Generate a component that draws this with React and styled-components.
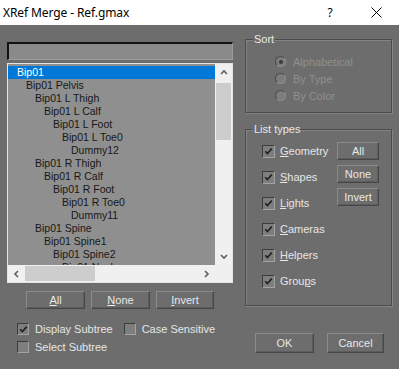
import React from 'react';
import styled, { createGlobalStyle } from 'styled-components';

const BG = '#6d6d6d';

const Global = createGlobalStyle`
  html, body { margin: 0; padding: 0; }
  body {
    width: 399px; height: 369px; overflow: hidden; background: ${BG};
    font-family: "Liberation Sans", Arial, sans-serif;
  }
  * { box-sizing: border-box; }
`;

const Window = styled.div`
  width: 399px; height: 369px; display: flex; flex-direction: column; background: ${BG};
`;

const TitleBar = styled.div`
  height: 25px; flex-shrink: 0; background: #fff; display: flex; align-items: center; padding-left: 3px;
`;
const Title = styled.div`
  flex: 1; font-family: "Noto Sans", "Open Sans", sans-serif; font-size: 12px; color: #000; letter-spacing: -0.1px;
`;
const TitleButton = styled.div`
  width: 46px; height: 25px; display: flex; align-items: center; justify-content: center;
  font-family: "Noto Sans", sans-serif; font-size: 12px; color: #000;
`;

const Body = styled.div`
  flex: 1; display: flex; padding-left: 7px; gap: 12px;
`;

const LeftCol = styled.div`
  width: 226px; display: flex; flex-direction: column; padding-top: 17px;
`;

const SearchBox = styled.div`
  height: 18px; background: #8a8a8a;
  border-top: 2px solid #121212; border-left: 2px solid #121212;
  border-right: 1px solid #9c9c9c; border-bottom: 1px solid #9c9c9c;
`;

const ListBox = styled.div`
  margin-top: 3px; height: 220px; border: 1px solid #e4e4e4;
  display: grid; grid-template-columns: 1fr 17px; grid-template-rows: 1fr 17px;
  background: #8f8f8f;
`;

const ListContent = styled.div`
  overflow: hidden; padding-top: 2px;
`;

const Row = styled.div`
  height: 13px; line-height: 13px; font-size: 10.5px; white-space: nowrap;
  padding-left: ${p => 9 + p.$level * 9}px;
  color: ${p => (p.$selected ? '#ffffff' : '#181818')};
  background: ${p => (p.$selected ? '#0078d7' : 'transparent')};
`;

const VScroll = styled.div`
  background: #f0f0f0; display: flex; flex-direction: column;
`;
const HScroll = styled.div`
  background: #f0f0f0; display: flex; align-items: stretch;
`;
const Corner = styled.div`
  background: #f0f0f0;
`;
const ArrowBtn = styled.div`
  width: 17px; height: 17px; flex-shrink: 0; display: flex; align-items: center; justify-content: center;
`;
const VTrack = styled.div`
  flex: 1; padding: 2px 1px 0 1px;
`;
const VThumb = styled.div`
  height: 57px; background: #cdcdcd;
`;
const HTrack = styled.div`
  flex: 1; padding: 1px 0;
`;
const HThumb = styled.div`
  width: 70px; height: 100%; background: #cdcdcd;
`;

const ButtonRow = styled.div`
  display: flex; gap: 6px; padding-left: 19px; margin-top: 8px;
`;

const Btn = styled.div`
  width: ${p => p.$w}px; height: ${p => p.$h || 18}px;
  display: flex; align-items: center; justify-content: center;
  font-size: 11px; color: #e8e8e8; background: ${BG};
  border: 1px solid; border-color: #8b8b8b #474747 #474747 #8b8b8b;
  box-shadow: inset -1px -1px 0 #5c5c5c;
  & u { text-decoration: underline; text-underline-offset: 1px; }
`;

const OptionRow = styled.div`
  display: flex; align-items: center; padding-left: 10px; gap: 11px;
  margin-top: ${p => p.$mt}px; height: 12px;
`;

const CheckLabel = styled.div`
  display: flex; align-items: center; gap: ${p => p.$gap || 6}px;
  font-size: 11px; color: #e6e6e6; height: ${p => p.$h || 12}px; white-space: nowrap;
  & u { text-decoration: underline; text-underline-offset: 1px; }
`;

const Box = styled.div`
  width: ${p => p.$size || 12}px; height: ${p => p.$size || 12}px; flex-shrink: 0;
  background: #7e7e7e;
  border: 1px solid; border-color: #3c3c3c #a2a2a2 #a2a2a2 #3c3c3c;
  display: flex; align-items: center; justify-content: center;
`;

const RightCol = styled.div`
  width: 147px; display: flex; flex-direction: column; padding-top: 14px;
`;

const GroupBox = styled.div`
  height: ${p => p.$h}px; margin-top: ${p => p.$mt || 0}px;
  border: 1px solid #4b4b4b;
  box-shadow: 1px 1px 0 #848484, inset 1px 1px 0 #848484;
`;

const GroupLabel = styled.div`
  width: fit-content; margin: -7px 0 0 7px; padding: 0 1px; height: 13px; line-height: 13px;
  background: ${BG}; font-size: 11px; color: #e8e8e8;
`;

const RadioList = styled.div`
  margin-top: 7px; padding-left: 29px; display: flex; flex-direction: column;
`;

const RadioRow = styled.div`
  height: 17px; display: flex; align-items: center; gap: 7px;
  font-size: 11px; color: #8f8f8f;
`;

const RadioCircle = styled.div`
  width: 11px; height: 11px; border-radius: 50%; flex-shrink: 0;
  background: #7c7c7c; border: 1px solid; border-color: #4a4a4a #8e8e8e #8e8e8e #4a4a4a;
  display: flex; align-items: center; justify-content: center;
  &::after {
    content: ''; width: 4px; height: 4px; border-radius: 50%;
    background: ${p => (p.$on ? '#3d3d3d' : 'transparent')};
  }
`;

const TypesContent = styled.div`
  display: flex; margin-top: 2px; padding-left: 16px;
`;

const TypesList = styled.div`
  width: 75px; display: flex; flex-direction: column;
`;

const TypesButtons = styled.div`
  display: flex; flex-direction: column; gap: 5px; margin-top: 4px;
`;

const Footer = styled.div`
  display: flex; gap: 13px; padding-left: 10px; margin-top: 27px;
`;

const Chevron = ({ dir }) => {
  const pts = {
    up: '1,5 4,2 7,5',
    down: '1,2 4,5 7,2',
    left: '5,1 2,4 5,7',
    right: '2,1 5,4 2,7',
  }[dir];
  return (
    <svg width="8" height="8" viewBox="0 0 8 8">
      <polyline points={pts} fill="none" stroke="#5f5f5f" strokeWidth="1.6" />
    </svg>
  );
};

const Check = () => (
  <svg width="9" height="9" viewBox="0 0 9 9">
    <polyline points="1.2,4.2 3.4,6.6 7.8,1.6" fill="none" stroke="#222" strokeWidth="1.7" />
  </svg>
);

const items = [
  ['Bip01', 0], ['Bip01 Pelvis', 1], ['Bip01 L Thigh', 2], ['Bip01 L Calf', 3],
  ['Bip01 L Foot', 4], ['Bip01 L Toe0', 5], ['Dummy12', 6], ['Bip01 R Thigh', 2],
  ['Bip01 R Calf', 3], ['Bip01 R Foot', 4], ['Bip01 R Toe0', 5], ['Dummy11', 6],
  ['Bip01 Spine', 2], ['Bip01 Spine1', 3], ['Bip01 Spine2', 4], ['Bip01 Neck', 5],
];

const types = [
  ['', 'G', 'eometry'], ['', 'S', 'hapes'], ['', 'L', 'ights'],
  ['', 'C', 'ameras'], ['', 'H', 'elpers'], ['Grou', 'p', 's'],
];

export default function App() {
  return (
    <Window>
      <Global />
      <TitleBar>
        <Title>XRef Merge - Ref.gmax</Title>
        <TitleButton>?</TitleButton>
        <TitleButton>
          <svg width="11" height="11" viewBox="0 0 11 11">
            <path d="M0.5 0.5 L10.5 10.5 M10.5 0.5 L0.5 10.5" stroke="#000" strokeWidth="1" />
          </svg>
        </TitleButton>
      </TitleBar>
      <Body>
        <LeftCol>
          <SearchBox />
          <ListBox>
            <ListContent>
              {items.map(([t, l], i) => (
                <Row key={i} $level={l} $selected={i === 0}>{t}</Row>
              ))}
            </ListContent>
            <VScroll>
              <ArrowBtn><Chevron dir="up" /></ArrowBtn>
              <VTrack><VThumb /></VTrack>
              <ArrowBtn><Chevron dir="down" /></ArrowBtn>
            </VScroll>
            <HScroll>
              <ArrowBtn><Chevron dir="left" /></ArrowBtn>
              <HTrack><HThumb /></HTrack>
              <ArrowBtn><Chevron dir="right" /></ArrowBtn>
            </HScroll>
            <Corner />
          </ListBox>
          <ButtonRow>
            <Btn $w={59}><u>A</u>ll</Btn>
            <Btn $w={59}><u>N</u>one</Btn>
            <Btn $w={58}><u>I</u>nvert</Btn>
          </ButtonRow>
          <OptionRow $mt={14}>
            <CheckLabel><Box><Check /></Box>Display Subtree</CheckLabel>
            <CheckLabel><Box />Case Sensitive</CheckLabel>
          </OptionRow>
          <OptionRow $mt={6}>
            <CheckLabel><Box />Select Subtree</CheckLabel>
          </OptionRow>
        </LeftCol>
        <RightCol>
          <GroupBox $h={74}>
            <GroupLabel>Sort</GroupLabel>
            <RadioList>
              <RadioRow><RadioCircle $on />Alphabetical</RadioRow>
              <RadioRow><RadioCircle />By Type</RadioRow>
              <RadioRow><RadioCircle />By Color</RadioRow>
            </RadioList>
          </GroupBox>
          <GroupBox $h={177} $mt={16}>
            <GroupLabel>List types</GroupLabel>
            <TypesContent>
              <TypesList>
                {types.map(([a, u, b], i) => (
                  <CheckLabel key={i} $h={26} $gap={5}>
                    <Box $size={13}><Check /></Box>
                    <span>{a}<u>{u}</u>{b}</span>
                  </CheckLabel>
                ))}
              </TypesList>
              <TypesButtons>
                <Btn $w={42}>All</Btn>
                <Btn $w={42}>None</Btn>
                <Btn $w={42}>Invert</Btn>
              </TypesButtons>
            </TypesContent>
          </GroupBox>
          <Footer>
            <Btn $w={59} $h={20}>OK</Btn>
            <Btn $w={57} $h={20}>Cancel</Btn>
          </Footer>
        </RightCol>
      </Body>
    </Window>
  );
}
